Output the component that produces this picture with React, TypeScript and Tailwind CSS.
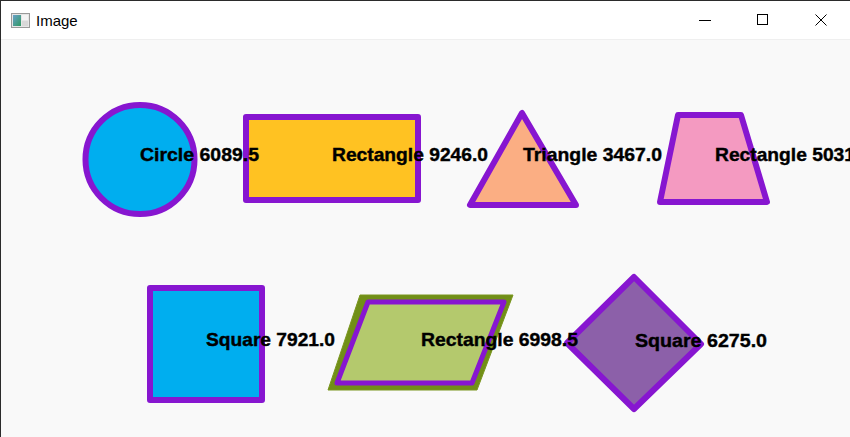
import React from "react";

const PURPLE = "#8716d0";

const labels: { x: number; y: number; w: number; t: string }[] = [
  { x: 140, y: 161, w: 119, t: "Circle 6089.5" },
  { x: 332, y: 161, w: 156, t: "Rectangle 9246.0" },
  { x: 523, y: 161, w: 139, t: "Triangle 3467.0" },
  { x: 715, y: 161, w: 156, t: "Rectangle 5031.0" },
  { x: 206, y: 346, w: 129, t: "Square 7921.0" },
  { x: 421, y: 346, w: 157, t: "Rectangle 6998.5" },
  { x: 635, y: 347, w: 132, t: "Square 6275.0" },
];

function Canvas() {
  return (
    <svg
      className="block"
      width={849}
      height={397}
      viewBox="1 40 849 397"
      xmlns="http://www.w3.org/2000/svg"
    >
      <g stroke={PURPLE} strokeWidth={6} strokeLinejoin="round">
        <circle cx={140} cy={159.5} r={54.5} fill="#00aeef" />
        <rect x={246} y={117} width={172} height={83} fill="#ffc222" />
        <polygon points="522,113 470,205 576,205" fill="#fbae83" />
        <polygon points="678,115 741,115 767,202 660,202" fill="#f49ac1" />
        <rect x={150} y={288} width={112} height={112} fill="#00aeef" />
        <polygon
          points="360,295 513,295 477,390 328,390"
          fill="#718f17"
          stroke="#7a961f"
          strokeWidth={1}
        />
        <polygon
          points="368,302 504,302 472,383 337,383"
          fill="#b4c96d"
          strokeWidth={5}
        />
        <polygon points="634,277 701,344 634,409 567,343" fill="#8c60a9" />
      </g>
      <g
        fill="#000"
        stroke="#000"
        strokeWidth={0.4}
        fontFamily="'Liberation Sans', Arial, sans-serif"
        fontWeight={700}
        fontSize={19}
      >
        {labels.map((l) => (
          <text
            key={l.t}
            x={l.x}
            y={l.y}
            textLength={l.w}
            lengthAdjust="spacingAndGlyphs"
          >
            {l.t}
          </text>
        ))}
      </g>
    </svg>
  );
}

export default function App() {
  return (
    <div className="w-[850px] h-[437px] overflow-hidden flex flex-col border-t border-l border-[#2b2b2b] bg-white">
      <div className="h-[39px] shrink-0 flex items-center bg-white border-b border-[#efefef]">
        <svg width="19" height="15" viewBox="0 0 19 15" className="ml-[10px] mt-[1px]">
          <defs>
            <linearGradient id="ig" x1="0" y1="0" x2="1" y2="1">
              <stop offset="0" stopColor="#6aa0c8" />
              <stop offset="1" stopColor="#2f9a62" />
            </linearGradient>
          </defs>
          <rect x="0.5" y="0.5" width="18" height="14" fill="#e6e6e6" stroke="#9a9a9a" />
          <rect x="2" y="2" width="8" height="11" fill="url(#ig)" />
          <rect x="11" y="2" width="6" height="5" fill="#f4f4f4" />
          <rect x="11" y="8" width="6" height="5" fill="#d8d8d8" />
        </svg>
        <span
          className="ml-[6px] text-[15px] leading-none text-black mt-[1px]"
          style={{ fontFamily: "'Liberation Sans', Arial, sans-serif" }}
        >
          Image
        </span>
        <div className="ml-auto flex h-full items-center">
          <div className="w-[58px] h-full flex items-center justify-center">
            <svg width="12" height="12" viewBox="0 0 12 12">
              <line x1="0" y1="6.5" x2="12" y2="6.5" stroke="#000" strokeWidth="1" />
            </svg>
          </div>
          <div className="w-[58px] h-full flex items-center justify-center">
            <svg width="12" height="12" viewBox="0 0 12 12">
              <rect x="0.5" y="0.5" width="10" height="10" fill="none" stroke="#000" strokeWidth="1" />
            </svg>
          </div>
          <div className="w-[58px] h-full flex items-center justify-center">
            <svg width="12" height="12" viewBox="0 0 12 12">
              <path d="M0.5 0.5 L11.5 11.5 M11.5 0.5 L0.5 11.5" stroke="#000" strokeWidth="1" />
            </svg>
          </div>
        </div>
      </div>
      <div className="flex-1 bg-[#f9f9f9]">
        <Canvas />
      </div>
    </div>
  );
}
